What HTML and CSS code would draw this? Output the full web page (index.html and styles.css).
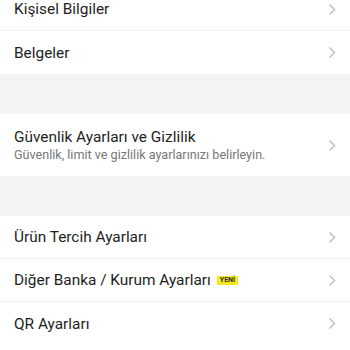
FILE: index.html
```html
<!DOCTYPE html>
<html lang="tr">
<head>
<meta charset="utf-8">
<link rel="stylesheet" href="styles.css">
</head>
<body>
<div class="page">
  <div class="group first">
    <div class="row"><div class="label"><div class="title">Kişisel Bilgiler</div></div><span class="chev"><svg width="8" height="13" viewBox="0 0 8 13"><path d="M1.5 1.5 L6.5 6.5 L1.5 11.5" fill="none" stroke="#c4c4c4" stroke-width="1.6"/></svg></span></div>
    <div class="row"><div class="label"><div class="title">Belgeler</div></div><span class="chev"><svg width="8" height="13" viewBox="0 0 8 13"><path d="M1.5 1.5 L6.5 6.5 L1.5 11.5" fill="none" stroke="#c4c4c4" stroke-width="1.6"/></svg></span></div>
  </div>
  <div class="gap"></div>
  <div class="group">
    <div class="row tall"><div class="label"><div class="title">Güvenlik Ayarları ve Gizlilik</div><div class="sub">Güvenlik, limit ve gizlilik ayarlarınızı belirleyin.</div></div><span class="chev"><svg width="8" height="13" viewBox="0 0 8 13"><path d="M1.5 1.5 L6.5 6.5 L1.5 11.5" fill="none" stroke="#c4c4c4" stroke-width="1.6"/></svg></span></div>
  </div>
  <div class="gap"></div>
  <div class="group">
    <div class="row"><div class="label"><div class="title">Ürün Tercih Ayarları</div></div><span class="chev"><svg width="8" height="13" viewBox="0 0 8 13"><path d="M1.5 1.5 L6.5 6.5 L1.5 11.5" fill="none" stroke="#c4c4c4" stroke-width="1.6"/></svg></span></div>
    <div class="row"><div class="label"><div class="title">Diğer Banka / Kurum Ayarları <span class="badge">YENİ</span></div></div><span class="chev"><svg width="8" height="13" viewBox="0 0 8 13"><path d="M1.5 1.5 L6.5 6.5 L1.5 11.5" fill="none" stroke="#c4c4c4" stroke-width="1.6"/></svg></span></div>
    <div class="row"><div class="label"><div class="title">QR Ayarları</div></div><span class="chev"><svg width="8" height="13" viewBox="0 0 8 13"><path d="M1.5 1.5 L6.5 6.5 L1.5 11.5" fill="none" stroke="#c4c4c4" stroke-width="1.6"/></svg></span></div>
  </div>
</div>
</body>
</html>
```
FILE: styles.css
```css
html, body {
  margin: 0;
  padding: 0;
  background: #ffffff;
  font-family: Roboto, "Noto Sans", sans-serif;
  color: #1e1e1e;
  overflow: hidden;
}
.page {
  width: 350px;
  display: flex;
  flex-direction: column;
}
.group {
  background: #ffffff;
  display: flex;
  flex-direction: column;
}
.group.first {
  margin-top: -12px;
}
.row {
  height: 43px;
  display: flex;
  align-items: center;
  justify-content: space-between;
  padding: 0 14px 0 14px;
  border-bottom: 1px solid #f0f0f0;
  box-sizing: border-box;
}
.row:last-child {
  border-bottom: none;
}
.row.tall {
  height: 62px;
}
.label {
  display: flex;
  flex-direction: column;
  gap: 1px;
}
.title {
  font-size: 15.4px;
  line-height: 18px;
  display: flex;
  align-items: center;
  gap: 6px;
}
.sub {
  font-size: 12.6px;
  line-height: 15px;
  color: #777777;
}
.badge {
  background: #f6e71e;
  color: #333;
  font-size: 7px;
  font-weight: 700;
  line-height: 9px;
  padding: 0 3px;
  border-radius: 1px;
}
.chev {
  display: flex;
  align-items: center;
}
.gap {
  height: 40px;
  background: #f3f3f3;
}
```
